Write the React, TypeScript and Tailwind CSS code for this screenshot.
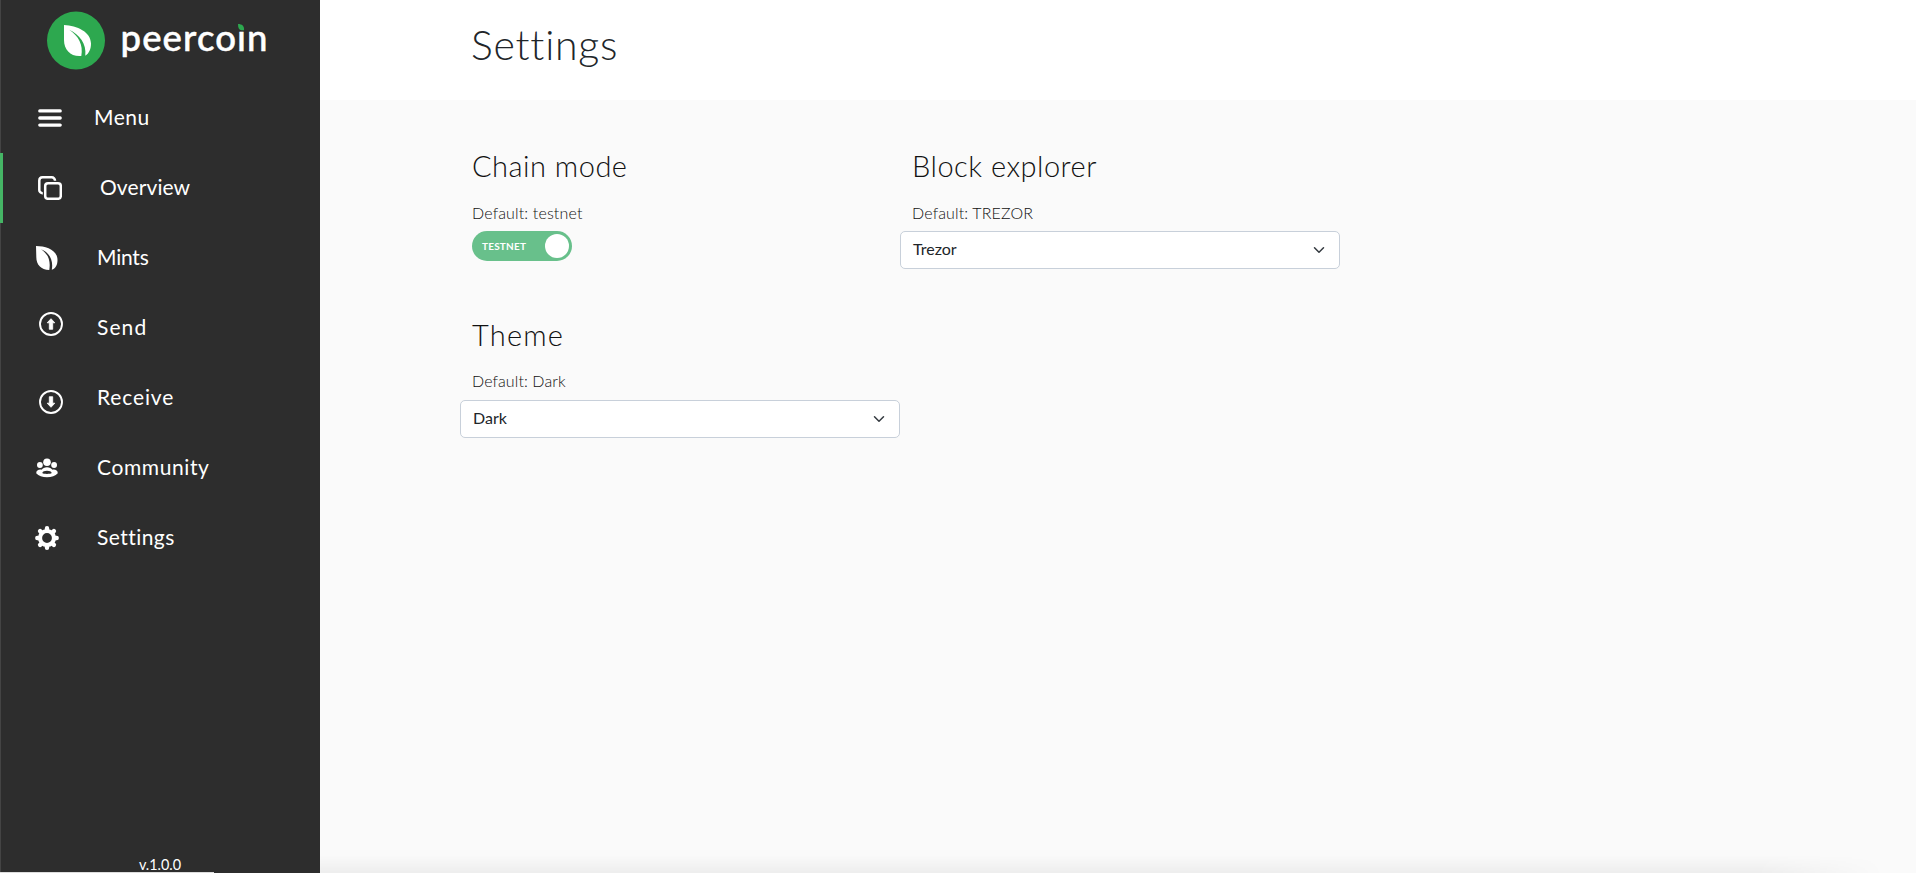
import type { ReactNode } from "react";

function Logo() {
  return (
    <svg width="230" height="72" viewBox="0 0 230 72" className="ml-[46px] block">
      <circle cx="30" cy="40.500" r="29" fill="#2da84f" />
      <path
        fill="#fff"
        d="M18 25C31 25.500 45 32 45 43.500C45 49 43 53.500 39.300 55.700C40.700 44 33.500 34.500 23.300 29.800C32.500 36 37.500 45 35.300 56C25 57 18 50 18 40Z"
      />
      <text
        x="74.500"
        y="51"
        textLength="147"
        fill="#fff"
        fontSize="36.500"
        fontWeight="500"
        stroke="#fff"
        strokeWidth="0.500"
        className="font-['Lato',sans-serif]"
      >
        peercoın
      </text>
      <path fill="#2da84f" d="M192 24C196 24 198.500 26 198 30.200H195.500C193 30 192 28 192 24Z" />
    </svg>
  );
}

const MenuIcon = () => (
  <svg width="24" height="24" viewBox="0 0 24 24" stroke="#fff" strokeWidth="3.300" strokeLinecap="round">
    <path d="M1.800 4.900H22.200M1.800 12H22.200M1.800 19.100H22.200" />
  </svg>
);

const OverviewIcon = () => (
  <svg width="24" height="24" viewBox="0 0 24 24" fill="none" stroke="#fff" strokeWidth="2.500">
    <rect x="7.200" y="7.200" width="15.600" height="15.600" rx="2.800" />
    <path d="M4.800 17.200A3.300 3.300 0 0 1 1.300 13.700V4.500A3.300 3.300 0 0 1 4.500 1.300H13.700A3.300 3.300 0 0 1 17 4.700" />
  </svg>
);

const LeafIcon = () => (
  <svg width="22" height="24" viewBox="0 0 22 24" fill="#fff">
    <path d="M0 0C10 0 21.500 4 21.500 14C21.500 19 19.500 22.500 15.800 23.800C17.500 14 13.500 6.500 5 3.200C12 8 14.800 14 13.300 24C5 23.500 0.300 19 0.300 11Z" />
  </svg>
);

const ArrowCircle = ({ down = false }: { down?: boolean }) => (
  <svg width="24" height="24" viewBox="0 0 24 24" className={down ? "rotate-180" : ""}>
    <circle cx="12" cy="12" r="11" fill="none" stroke="#fff" strokeWidth="1.900" />
    <path fill="#fff" stroke="#fff" strokeWidth="0.800" strokeLinejoin="round" d="M12 6.700L15.800 10.800H13.700V17.300H10.300V10.800H8.200Z" />
  </svg>
);

const CommunityIcon = () => (
  <svg width="22" height="20" viewBox="0 0 22 20" fill="#fff">
    <circle cx="11" cy="4.200" r="3.800" />
    <circle cx="3.900" cy="7" r="2.900" />
    <circle cx="18.100" cy="7" r="2.900" />
    <path
      fillRule="evenodd"
      d="M11 9.200C13.500 9.200 15.300 10.300 16.300 11.700C19.500 11.300 21.800 12.500 21.800 15.200C19.500 17.800 15.500 19.200 11 19.200C6.500 19.200 2.500 17.800 0.200 15.200C0.200 12.500 2.500 11.300 5.700 11.700C6.700 10.300 8.500 9.200 11 9.200ZM11 12.800C8.500 12.800 6.500 13.700 6.300 15C7.500 16.200 14.500 16.200 15.700 15C15.500 13.700 13.500 12.800 11 12.800Z"
    />
  </svg>
);

const GearIcon = () => (
  <svg width="24" height="24" viewBox="0 0 24 24" fill="none" stroke="#fff">
    <circle cx="12" cy="12" r="7" strokeWidth="4.200" />
    <path
      strokeWidth="4.400"
      strokeLinecap="round"
      d="M12 2.300V4M12 20V21.700M2.300 12H4M20 12H21.700M5.100 5.100L6.300 6.300M17.700 17.700L18.900 18.900M5.100 18.900L6.300 17.700M17.700 6.300L18.900 5.100"
    />
  </svg>
);

function NavItem({ icon, iconClass, label, textClass }: { icon: ReactNode; iconClass: string; label: string; textClass: string }) {
  return (
    <a className="flex h-[70px] items-center">
      <span className={`flex shrink-0 ${iconClass}`}>{icon}</span>
      <span className={`whitespace-nowrap pb-0.5 text-[21px] leading-6 ${textClass}`}>{label}</span>
    </a>
  );
}

function SelectBox({ value, className }: { value: string; className: string }) {
  return (
    <button className={`flex h-[38px] w-[440px] items-center justify-between rounded-[5px] border border-[#c8d0da] bg-white pr-[14px] pl-3 text-base text-[#212529] ${className}`}>
      <span className="pb-0.5">{value}</span>
      <svg width="12" height="12" viewBox="0 0 16 16" fill="none" stroke="#343a40" strokeWidth="2" strokeLinecap="round" strokeLinejoin="round">
        <path d="m2 5 6 6 6-6" />
      </svg>
    </button>
  );
}

export default function App() {
  return (
    <div className="relative flex h-[873px] w-[1916px] overflow-hidden bg-[#fafafa] font-['Lato',sans-serif] [font-variant-ligatures:none]">
      <aside className="flex w-80 shrink-0 flex-col bg-[#2d2d2d] text-white">
        <div className="flex flex-1 flex-col border-l border-[#444]">
          <div className="-ml-px h-[83px]">
            <Logo />
          </div>
          <nav className="-ml-px">
            <NavItem icon={<MenuIcon />} iconClass="w-[94px] pl-[38px]" label="Menu" textClass="tracking-[0.500px]" />
            <div className="border-l-[3px] border-[#45b565]">
              <NavItem icon={<OverviewIcon />} iconClass="w-[97px] pl-[35px]" label="Overview" textClass="tracking-[0.100px]" />
            </div>
            <NavItem icon={<LeafIcon />} iconClass="w-[97px] pl-9" label="Mints" textClass="tracking-[-0.200px]" />
            <NavItem icon={<ArrowCircle />} iconClass="w-[97px] pb-2 pl-[39px]" label="Send" textClass="tracking-[1.100px]" />
            <NavItem icon={<ArrowCircle down />} iconClass="w-[97px] pt-2 pl-[39px]" label="Receive" textClass="tracking-[0.850px]" />
            <NavItem icon={<CommunityIcon />} iconClass="w-[97px] pl-9" label="Community" textClass="tracking-[0.600px]" />
            <NavItem icon={<GearIcon />} iconClass="w-[97px] pl-[35px]" label="Settings" textClass="tracking-[0.450px]" />
          </nav>
          <div className="mt-auto pr-px text-center text-[14.400px] leading-4">v.1.0.0</div>
        </div>
      </aside>
      <main className="flex-1">
        <header className="h-[100px] bg-white pt-[21px] pl-[151px]">
          <h1 className="text-[41px] leading-[48px] font-light tracking-[0.750px] text-[#212529]">Settings</h1>
        </header>
        <div className="grid grid-cols-[440px_440px] pt-[49px] pl-[140px] text-[#111]">
          <section className="h-[169px]">
            <h2 className="pl-3 text-[29px] leading-[34px] font-light tracking-[0.500px]">Chain mode</h2>
            <p className="mt-[18px] pl-3 text-base leading-6 font-light tracking-[0.150px]">Default: testnet</p>
            <div className="mt-[6px] ml-3 flex h-[30px] w-[100px] items-center justify-between rounded-full bg-[#68c08b] pr-[3px] pl-[10px] text-white">
              <span className="text-[10px] font-bold tracking-[0.200px]">TESTNET</span>
              <span className="size-6 rounded-full bg-white" />
            </div>
          </section>
          <section>
            <h2 className="pl-3 text-[29px] leading-[34px] font-light tracking-[0.500px]">Block explorer</h2>
            <p className="mt-[18px] pl-3 text-base leading-6 font-light tracking-[0.150px]">Default: TREZOR</p>
            <SelectBox value="Trezor" className="mt-[6px]" />
          </section>
          <section>
            <h2 className="pl-3 text-[29px] leading-[34px] font-light tracking-[1.200px]">Theme</h2>
            <p className="mt-[17px] pl-3 text-base leading-6 font-light tracking-[0.100px]">Default: Dark</p>
            <SelectBox value="Dark" className="mt-[7px]" />
          </section>
        </div>
      </main>
      <div className="absolute bottom-0 left-80 h-[18px] w-[1596px] bg-linear-to-b from-transparent to-black/5 [mask-image:linear-gradient(to_right,black_90%,transparent_98%)]" />
      <div className="absolute bottom-0 left-0 h-px w-[214px] bg-[#ddd]" />
    </div>
  );
}
